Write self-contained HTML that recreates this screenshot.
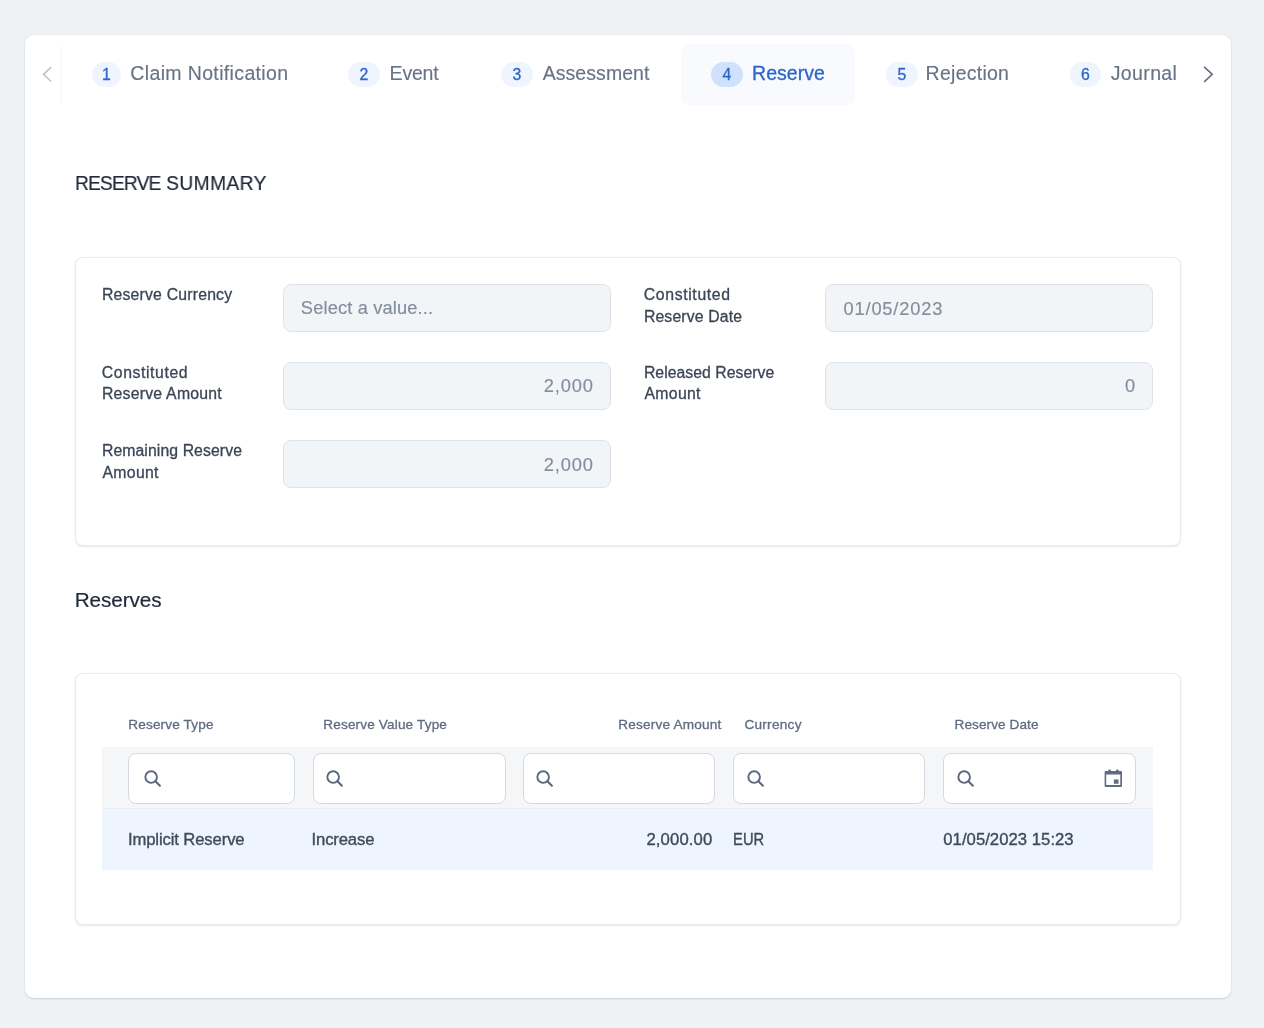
<!DOCTYPE html>
<html lang="en">
<head>
<meta charset="utf-8">
<title>Reserve</title>
<style>
*{box-sizing:border-box;margin:0;padding:0}
html,body{width:1264px;height:1028px;overflow:hidden}
body{background:#eef2f5;font-family:"Liberation Sans",sans-serif;position:relative;color:#3a4454}
#root{position:absolute;left:0;top:0;width:1264px;height:1028px;will-change:transform}
.grp{display:contents}
.w1{letter-spacing:-.95px}.w2{letter-spacing:.38px}
.t{position:absolute;white-space:nowrap;line-height:1}
.card{position:absolute;left:25px;top:35px;width:1206px;height:963px;background:#fff;border-radius:9px;box-shadow:0 1px 2px rgba(30,40,60,.15),0 0 2px rgba(30,40,60,.07)}
.tabbar{position:absolute;left:61px;top:44px;width:1134px;height:60px;overflow:hidden;background:transparent}
.sep{position:absolute;left:61px;top:44px;width:1px;height:61px;background:#f5f7f9}
.tabact{position:absolute;left:681px;top:44px;width:174px;height:61px;background:#f8fafe;border-radius:8px}
.badge{position:absolute;top:62px;height:25px;border-radius:12.5px;background:#eff5fe;color:#2f66c9;font-size:15.8px;line-height:25px;text-align:center;-webkit-text-stroke:.3px #2f66c9}
.badge.on{background:#cfe1fc}
.tab{font-size:19.5px;color:#687387;top:63px;-webkit-text-stroke:.15px #687387}
.tab.on{color:#2c65c8;-webkit-text-stroke:.3px #2c65c8}
.h{font-size:20.7px;color:#1f2937;font-weight:400;-webkit-text-stroke:.2px #1f2937}
.panel{position:absolute;left:75px;width:1106px;background:#fff;border:1px solid #e7eaee;border-radius:8px;box-shadow:0 1px 2px rgba(30,40,60,.11)}
.lbl{font-size:15.8px;color:#3b4556;font-weight:400;-webkit-text-stroke:.3px #3b4556}
.inp{position:absolute;width:328px;height:48px;background:#f1f5f8;border:1px solid #dee3e9;border-radius:8px}
.val{font-size:18.3px;color:#838d9e;-webkit-text-stroke:.15px #838d9e}
.th{font-size:13.6px;color:#5f6c80;-webkit-text-stroke:.3px #5f6c80}
.frow{position:absolute;left:102px;top:747px;width:1051px;height:62px;background:#f4f6f8;border-bottom:1px solid #e9ecf0}
.finp{position:absolute;top:753px;height:51px;background:#fff;border:1px solid #d5dae2;border-radius:8px}
.drow{position:absolute;left:102px;top:809px;width:1051px;height:62px;background:#eff5fe;border-bottom:1px solid #f8fbff}
.td{font-size:16.7px;color:#404a5b;-webkit-text-stroke:.36px #404a5b}
svg{position:absolute;overflow:visible}
#h1{transform:scaleX(.93);transform-origin:0 0}
#td4{transform:scaleX(.88);transform-origin:0 0}
/*FIT-START*/
#tab1{left:130.35px!important;top:64.00px!important;letter-spacing:0.354px}
#tab2{left:389.58px!important;top:64.00px!important;letter-spacing:-0.190px}
#tab3{left:542.70px!important;top:64.00px!important;letter-spacing:0.057px}
#tab4{left:752.06px!important;top:64.00px!important;letter-spacing:0.014px}
#tab5{left:925.61px!important;top:64.00px!important;letter-spacing:0.255px}
#tab6{left:1110.73px!important;top:64.00px!important;letter-spacing:0.375px}
#h1{left:75.33px!important;top:173.41px!important;letter-spacing:0.454px}
#l1{left:101.92px!important;top:287.00px!important;letter-spacing:0.193px}
#v1{left:300.85px!important;top:298.75px!important;letter-spacing:0.128px}
#l2a{left:101.81px!important;top:364.50px!important;letter-spacing:0.584px}
#l2b{left:101.92px!important;top:386.25px!important;letter-spacing:0.233px}
#v2{left:543.64px!important;top:377.21px!important;letter-spacing:0.877px}
#l3a{left:101.92px!important;top:442.50px!important;letter-spacing:0.082px}
#l3b{left:102.40px!important;top:464.50px!important;letter-spacing:0.336px}
#v3{left:543.69px!important;top:456.00px!important;letter-spacing:0.866px}
#l4a{left:643.81px!important;top:287.00px!important;letter-spacing:0.632px}
#l4b{left:643.92px!important;top:308.50px!important;letter-spacing:0.133px}
#v4{left:843.55px!important;top:300.00px!important;letter-spacing:0.806px}
#l5a{left:643.92px!important;top:364.50px!important;letter-spacing:0.029px}
#l5b{left:644.40px!important;top:386.11px!important;letter-spacing:0.336px}
#v5{left:1125.11px!important;top:377.21px!important;letter-spacing:0.000px}
#h2{left:74.67px!important;top:589.91px!important;letter-spacing:-0.075px}
#th1{left:128.31px!important;top:717.75px!important;letter-spacing:0.144px}
#th2{left:323.31px!important;top:717.75px!important;letter-spacing:0.144px}
#th3{left:618.31px!important;top:717.75px!important;letter-spacing:0.183px}
#th4{left:744.38px!important;top:717.75px!important;letter-spacing:0.272px}
#th5{left:954.53px!important;top:717.75px!important;letter-spacing:0.082px}
#td1{left:127.93px!important;top:831.50px!important;letter-spacing:-0.133px}
#td2{left:311.53px!important;top:831.50px!important;letter-spacing:-0.152px}
#td3{left:646.40px!important;top:831.50px!important;letter-spacing:0.132px}
#td4{left:733.20px!important;top:831.50px!important;letter-spacing:0.112px}
#td5{left:943.29px!important;top:831.50px!important;letter-spacing:0.029px}
/*FIT-END*/
</style>
</head>
<body>
<div id="root">
<main class="card"></main>

<!-- tabs -->
<nav class="grp">
<div class="tabbar"></div>
<div class="sep"></div>
<div class="tabact"></div>
<svg style="left:42px;top:66px" width="11" height="17" viewBox="0 0 11 17"><path d="M9.1 1.1 L1.5 8.3 L9.1 15.5" fill="none" stroke="#bfc4cc" stroke-width="1.6"/></svg>
<svg style="left:1203px;top:66px" width="11" height="17" viewBox="0 0 11 17"><path d="M1.2 0.8 L9.2 8.3 L1.2 15.8" fill="none" stroke="#687285" stroke-width="1.7"/></svg>

<div class="badge" style="left:92px;width:29px">1</div>
<span class="t tab" id="tab1" style="left:130px">Claim Notification</span>
<div class="badge" style="left:348px;width:32px">2</div>
<span class="t tab" id="tab2" style="left:390px">Event</span>
<div class="badge" style="left:501px;width:32px">3</div>
<span class="t tab" id="tab3" style="left:542px">Assessment</span>
<div class="badge on" style="left:711px;width:32px">4</div>
<span class="t tab on" id="tab4" style="left:753px">Reserve</span>
<div class="badge" style="left:886px;width:32px">5</div>
<span class="t tab" id="tab5" style="left:926px">Rejection</span>
<div class="badge" style="left:1070px;width:31px">6</div>
<span class="t tab" id="tab6" style="left:1111px">Journal</span>

</nav>

<!-- Reserve summary -->
<section class="grp">
<h2 class="t h" id="h1" style="left:75px;top:173px"><span class="w1">RESERVE</span> <span class="w2">SUMMARY</span></h2>
<div class="panel" style="top:257px;height:289px"></div>

<label class="t lbl" id="l1" style="left:102px;top:287px">Reserve Currency</label>
<div class="inp" style="left:283px;top:284px"></div>
<span class="t val" id="v1" style="left:301px;top:298px">Select a value...</span>

<label class="t lbl" id="l2a" style="left:102px;top:365px">Constituted</label>
<label class="t lbl" id="l2b" style="left:102px;top:386px">Reserve Amount</label>
<div class="inp" style="left:283px;top:362px"></div>
<span class="t val" id="v2" style="left:500px;top:377px">2,000</span>

<label class="t lbl" id="l3a" style="left:102px;top:443px">Remaining Reserve</label>
<label class="t lbl" id="l3b" style="left:102px;top:465px">Amount</label>
<div class="inp" style="left:283px;top:440px"></div>
<span class="t val" id="v3" style="left:500px;top:455px">2,000</span>

<label class="t lbl" id="l4a" style="left:644px;top:287px">Constituted</label>
<label class="t lbl" id="l4b" style="left:644px;top:309px">Reserve Date</label>
<div class="inp" style="left:825px;top:284px"></div>
<span class="t val" id="v4" style="left:843px;top:299px">01/05/2023</span>

<label class="t lbl" id="l5a" style="left:644px;top:365px">Released Reserve</label>
<label class="t lbl" id="l5b" style="left:644px;top:386px">Amount</label>
<div class="inp" style="left:825px;top:362px"></div>
<span class="t val" id="v5" style="left:500px;top:377px">0</span>

</section>

<!-- Reserves -->
<section class="grp">
<h2 class="t h" id="h2" style="left:75px;top:590px">Reserves</h2>
<div class="panel" style="top:673px;height:252px"></div>

<span class="t th" id="th1" style="left:128px;top:718px">Reserve Type</span>
<span class="t th" id="th2" style="left:323px;top:718px">Reserve Value Type</span>
<span class="t th" id="th3" style="left:500px;top:718px">Reserve Amount</span>
<span class="t th" id="th4" style="left:744px;top:718px">Currency</span>
<span class="t th" id="th5" style="left:954px;top:718px">Reserve Date</span>

<div class="frow"></div>
<div class="finp" style="left:128px;width:167px"></div>
<div class="finp" style="left:313px;width:193px"></div>
<div class="finp" style="left:523px;width:192px"></div>
<div class="finp" style="left:733px;width:192px"></div>
<div class="finp" style="left:943px;width:193px"></div>

<svg class="mag" style="left:144px;top:769px" width="18" height="18" viewBox="0 0 18 18"><circle cx="7.15" cy="8.1" r="5.8" fill="none" stroke="#5a667e" stroke-width="1.9"/><path d="M11.4 12.3 L15.9 16.8" stroke="#5a667e" stroke-width="2" stroke-linecap="round"/></svg>
<svg class="mag" style="left:326px;top:769px" width="18" height="18" viewBox="0 0 18 18"><circle cx="7.15" cy="8.1" r="5.8" fill="none" stroke="#5a667e" stroke-width="1.9"/><path d="M11.4 12.3 L15.9 16.8" stroke="#5a667e" stroke-width="2" stroke-linecap="round"/></svg>
<svg class="mag" style="left:536px;top:769px" width="18" height="18" viewBox="0 0 18 18"><circle cx="7.15" cy="8.1" r="5.8" fill="none" stroke="#5a667e" stroke-width="1.9"/><path d="M11.4 12.3 L15.9 16.8" stroke="#5a667e" stroke-width="2" stroke-linecap="round"/></svg>
<svg class="mag" style="left:747px;top:769px" width="18" height="18" viewBox="0 0 18 18"><circle cx="7.15" cy="8.1" r="5.8" fill="none" stroke="#5a667e" stroke-width="1.9"/><path d="M11.4 12.3 L15.9 16.8" stroke="#5a667e" stroke-width="2" stroke-linecap="round"/></svg>
<svg class="mag" style="left:957px;top:769px" width="18" height="18" viewBox="0 0 18 18"><circle cx="7.15" cy="8.1" r="5.8" fill="none" stroke="#5a667e" stroke-width="1.9"/><path d="M11.4 12.3 L15.9 16.8" stroke="#5a667e" stroke-width="2" stroke-linecap="round"/></svg>

<!-- calendar icon -->
<svg style="left:1104px;top:769px" width="19" height="19" viewBox="0 0 19 19"><path d="M0.6 3.1a1.2 1.2 0 0 1 1.2-1.2H16.8a1.2 1.2 0 0 1 1.2 1.2V16.7a1.2 1.2 0 0 1-1.2 1.2H1.8a1.2 1.2 0 0 1-1.2-1.2Z M2.2 5.6H16.3V16.1H2.2Z M9.9 10.4h4.6v4.3h-4.6Z" fill="#5f6b80" fill-rule="evenodd"/><rect x="4.3" y="0.5" width="2.6" height="2.4" rx="1" fill="#5f6b80"/><rect x="12" y="0.5" width="2.6" height="2.4" rx="1" fill="#5f6b80"/></svg>

<div class="drow"></div>
<span class="t td" id="td1" style="left:128px;top:831px">Implicit Reserve</span>
<span class="t td" id="td2" style="left:312px;top:831px">Increase</span>
<span class="t td" id="td3" style="left:500px;top:831px">2,000.00</span>
<span class="t td" id="td4" style="left:733px;top:831px">EUR</span>
<span class="t td" id="td5" style="left:943px;top:831px">01/05/2023 15:23</span>
</section>
</div>
</body>
</html>
